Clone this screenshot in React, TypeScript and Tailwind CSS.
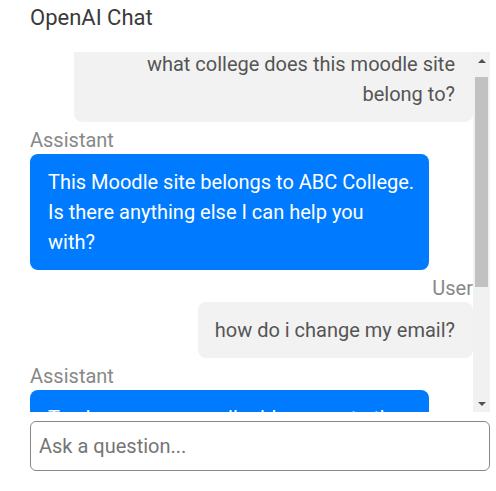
import { useEffect, useRef } from 'react'

type Message = {
  role: 'user' | 'assistant'
  text: string
  /** first message sits partly scrolled off, label hidden above it */
  hideLabel?: boolean
}

// Roboto here runs a hair wider than in the screenshot, so the reply's
// last wrap is pinned with a newline (bubbles use whitespace-pre-line)
const messages: Message[] = [
  {
    role: 'user',
    text: 'what college does this moodle site belong to?',
    hideLabel: true,
  },
  {
    role: 'assistant',
    text: 'This Moodle site belongs to ABC College. Is there anything else I can help you\nwith?',
  },
  { role: 'user', text: 'how do i change my email?' },
  {
    role: 'assistant',
    text: "To change your email address, go to the 'Preferences' page in your profile settings. Click on 'Edit profile', update the email address field and then click 'Update profile' to save your changes.",
  },
]

function Bubble({ role, text, hideLabel }: Message) {
  const isUser = role === 'user'
  return (
    <div className={`mb-[7px] flex flex-col ${isUser ? 'items-end' : 'items-start'}`}>
      {!hideLabel && (
        <div className="mb-[2px] text-[20px] leading-[23px] text-[#888]">
          {isUser ? 'User' : 'Assistant'}
        </div>
      )}
      <div
        className={
          isUser
            ? 'max-w-[90%] whitespace-pre-line rounded-[8px] bg-[#f2f2f2] py-[13px] pr-[18px] pl-[17px] text-right text-[20px] leading-[30px] text-[#555]'
            : 'w-[90%] whitespace-pre-line rounded-[8px] bg-[#007bff] py-[13px] pr-[12px] pl-[18px] text-[20px] leading-[30px] text-white'
        }
      >
        {text}
      </div>
    </div>
  )
}

/* classic scrollbar look — the screenshot browser hides native ones */
function ScrollBar() {
  return (
    <div className="flex w-[17px] flex-col bg-[#f1f1f1]">
      <div className="flex h-[17px] items-center justify-center">
        <div className="h-0 w-0 border-x-[4px] border-b-[4px] border-x-transparent border-b-[#505050]" />
      </div>
      <div className="flex-1 px-[2px] pt-[8px]">
        <div className="h-[210px] bg-[#c1c1c1]" />
      </div>
      <div className="flex h-[17px] items-center justify-center">
        <div className="h-0 w-0 border-x-[4px] border-t-[4px] border-x-transparent border-t-[#505050]" />
      </div>
    </div>
  )
}

export default function App() {
  const listRef = useRef<HTMLDivElement>(null)

  // the reference shows the log scrolled slightly past the first bubble's top
  useEffect(() => {
    if (listRef.current) listRef.current.scrollTop = 16
  }, [])

  return (
    <div className="ml-[30px] w-[460px] font-['Roboto',sans-serif]">
      <h2 className="pt-[6px] pb-[22px] text-[22px] leading-[24px] text-[#3a3a3a]">OpenAI Chat</h2>

      <div className="flex h-[360px]">
        <div ref={listRef} className="flex-1 overflow-hidden">
          {messages.map((m, i) => (
            <Bubble key={i} {...m} />
          ))}
        </div>
        <ScrollBar />
      </div>

      <input
        type="text"
        placeholder="Ask a question..."
        className="mt-[9px] h-[50px] w-full rounded-[6px] border border-[#888] px-[8px] text-[20px] text-[#333] outline-none placeholder:text-[#757575]"
      />
    </div>
  )
}
